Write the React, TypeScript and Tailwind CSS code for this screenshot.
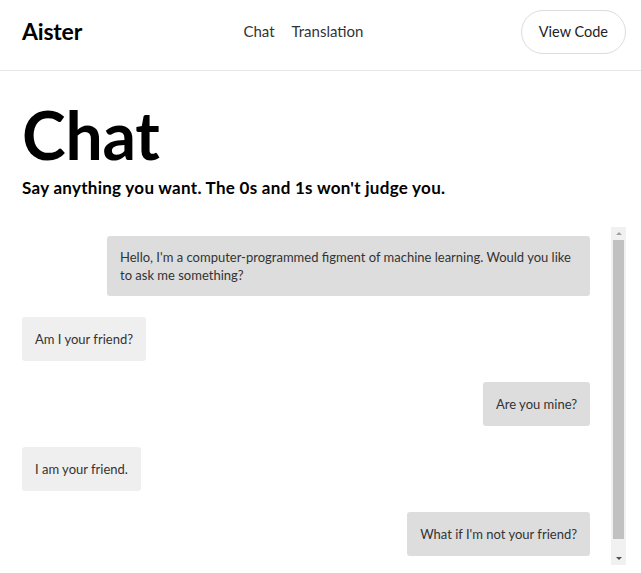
import React from 'react';

type Message = { from: 'bot' | 'user'; text: string };

const messages: Message[] = [
  { from: 'bot', text: "Hello, I'm a computer-programmed figment of machine learning. Would you like to ask me something?" },
  { from: 'user', text: 'Am I your friend?' },
  { from: 'bot', text: 'Are you mine?' },
  { from: 'user', text: 'I am your friend.' },
  { from: 'bot', text: "What if I'm not your friend?" },
];

const font = { fontFamily: 'Lato, "Noto Sans", sans-serif' };

function Bubble({ from, text }: Message) {
  const isBot = from === 'bot';
  return (
    <div className={`flex ${isBot ? 'justify-end' : 'justify-start'}`}>
      <div
        className={`max-w-[483px] min-h-[44px] flex items-center rounded-[3px] px-[13px] py-[12px] text-[13px] leading-[18px] text-[#333] ${
          isBot ? 'bg-[#dddddd]' : 'bg-[#efefef]'
        }`}
      >
        {text}
      </div>
    </div>
  );
}

function Scrollbar() {
  return (
    <div className="w-[15px] bg-[#f1f1f1] flex flex-col items-center">
      <div className="h-[13px] w-full flex items-center justify-center">
        <div className="w-0 h-0 border-l-[3px] border-r-[3px] border-b-[3px] border-l-transparent border-r-transparent border-b-[#a3a3a3]" />
      </div>
      <div className="flex-1 w-[11px] bg-[#c1c1c1] mb-[13px]" />
      <div className="h-[13px] w-full flex items-center justify-center">
        <div className="w-0 h-0 border-l-[3px] border-r-[3px] border-t-[3px] border-l-transparent border-r-transparent border-t-[#505050]" />
      </div>
    </div>
  );
}

export default function App() {
  return (
    <div className="w-[641px] h-[573px] bg-white overflow-hidden text-black" style={font}>
      <header className="h-[71px] border-b border-[#e6e6e6] flex items-center justify-between pl-[22px] pr-[15px] pb-[7px]">
        <div className="text-[23px] font-bold tracking-[-0.2px]">Aister</div>
        <nav className="flex gap-[17px] text-[15px] text-[#333] ml-[4px]">
          <a>Chat</a>
          <a>Translation</a>
        </nav>
        <button className="h-[44px] px-[17px] rounded-full border border-[#dcdcdc] text-[14.5px] text-[#222]">
          View Code
        </button>
      </header>
      <main className="pl-[22px] pr-[15px]">
        <h1 className="text-[66px] font-bold leading-[66px] pt-[31px] tracking-[-0.2px]">Chat</h1>
        <p className="text-[17px] font-bold leading-[22px] mt-[9px] tracking-[0.28px]">
          Say anything you want. The 0s and 1s won't judge you.
        </p>
        <div className="flex h-[338px] mt-[28px]">
          <div className="flex-1 flex flex-col gap-[21px] pt-[9px] pr-[21px]">
            {messages.map((m, i) => (
              <Bubble key={i} {...m} />
            ))}
          </div>
          <Scrollbar />
        </div>
      </main>
    </div>
  );
}
